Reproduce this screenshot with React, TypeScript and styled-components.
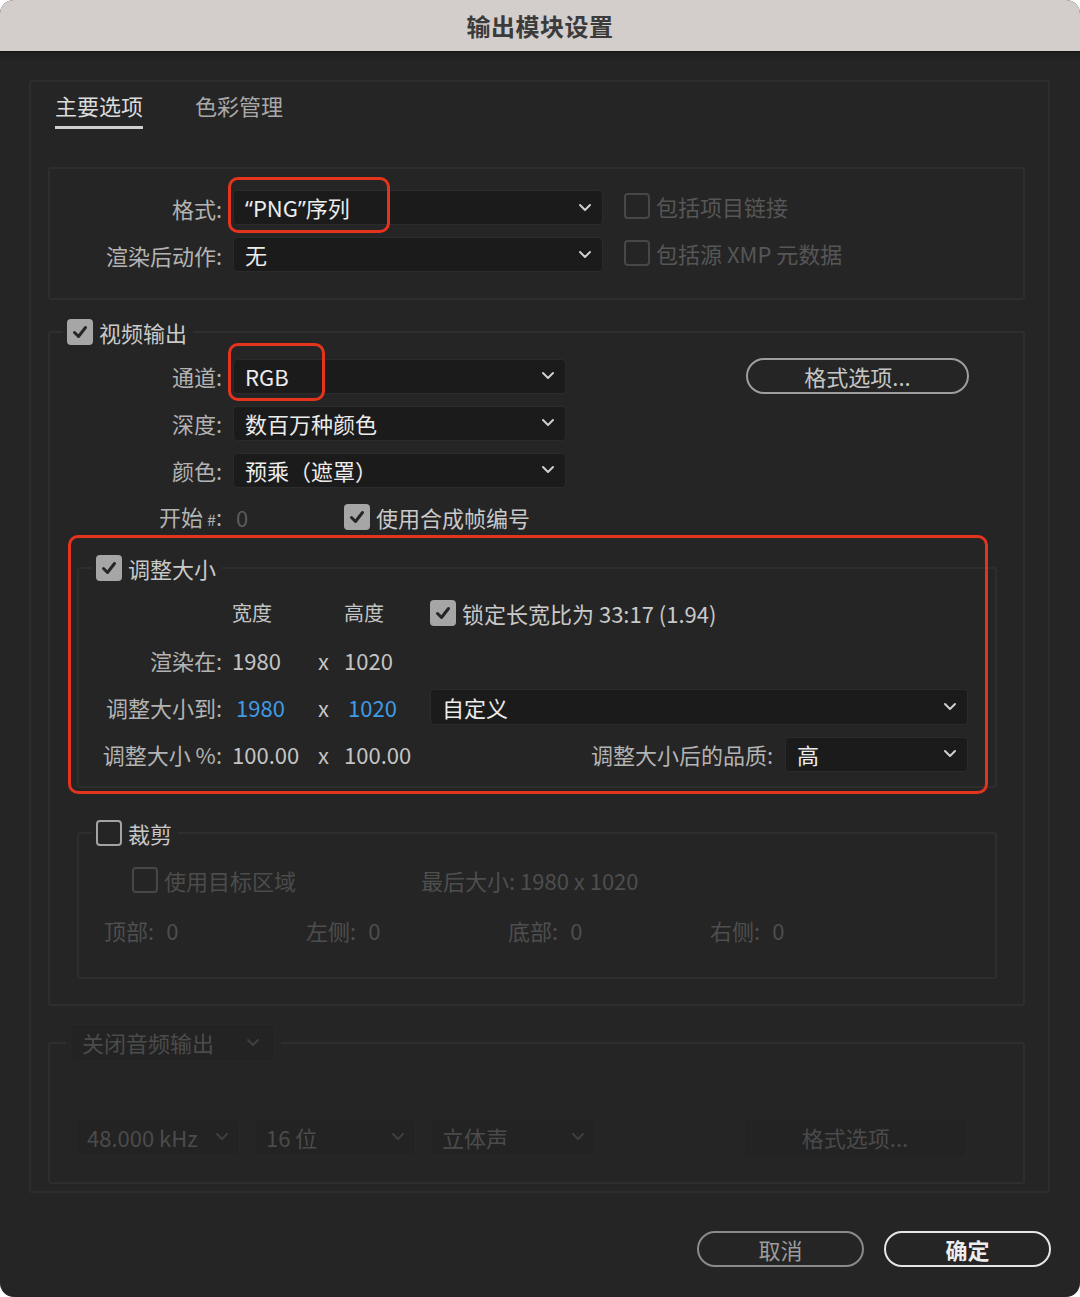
import styled, { createGlobalStyle } from "styled-components";

const GlobalStyle = createGlobalStyle`
  html, body {
    margin: 0;
    padding: 0;
    background: #ffffff;
  }
  body {
    font-family: "Noto Sans CJK SC", "Noto Sans", sans-serif;
  }
`;

const Window = styled.div`
  width: 1080px;
  height: 1297px;
  border-radius: 14px;
  overflow: hidden;
  background: #252525;
  display: flex;
  flex-direction: column;
  font-family: "Noto Sans CJK SC", "Noto Sans", sans-serif;
`;

const TitleBar = styled.div`
  height: 51px;
  flex-shrink: 0;
  background: #d3cdcc;
  border-bottom: 1px solid #151515;
  display: flex;
  align-items: center;
  justify-content: center;
  font-size: 24px;
  font-weight: 700;
  color: #3b3b3b;
  letter-spacing: 0.5px;
`;

const Body = styled.div`
  padding: 28px 30px 0 29px;
  display: flex;
  flex-direction: column;
  background: linear-gradient(#1f1f1f, #252525 10px);
`;

const MainPanel = styled.div`
  border: 2px solid #2d2d2d;
  border-radius: 2px;
  padding: 0 23px 7px 17px;
`;

const TabBar = styled.div`
  display: flex;
  gap: 52px;
  padding: 8px 0 0 7px;
`;

const Tab = styled.div<{ $active?: boolean }>`
  font-size: 22px;
  line-height: 30px;
  padding-bottom: 6px;
  color: ${(p) => (p.$active ? "#dcdcdc" : "#a9a9a9")};
  border-bottom: 3px solid ${(p) => (p.$active ? "#cfcfcf" : "transparent")};
`;

const Group = styled.fieldset<{ $top: number; $left?: number; $right?: number }>`
  margin: ${(p) => p.$top}px ${(p) => p.$right ?? 0}px 0 ${(p) => p.$left ?? 0}px;
  padding: 0;
  min-width: 0;
  border: 2px solid #2e2e2e;
  border-radius: 3px;
`;

const Legend = styled.legend<{ $offset: number }>`
  margin-left: ${(p) => p.$offset}px;
  padding: 0 6px 0 4px;
  display: flex;
  align-items: center;
  gap: 6px;
  min-height: 30px;
  font-size: 22px;
  line-height: 30px;
  color: #c9c9c9;
`;

const GroupContent = styled.div<{ $pad: string; $gap?: number }>`
  display: flex;
  flex-direction: column;
  gap: ${(p) => p.$gap ?? 0}px;
  padding: ${(p) => p.$pad};
`;

const FieldRow = styled.div<{ $h?: number }>`
  display: flex;
  align-items: center;
  height: ${(p) => p.$h ?? 35}px;
`;

const FieldLabel = styled.div`
  width: 183px;
  flex-shrink: 0;
  box-sizing: border-box;
  padding-right: 11px;
  text-align: right;
  font-size: 22px;
  line-height: 30px;
  color: #b3b3b3;
  white-space: nowrap;
`;

const SmallMark = styled.span`
  font-size: 16px;
  margin-left: 4px;
`;

const NarrowQuote = styled.span`
  font-family: "Noto Sans", sans-serif;
`;

const SelectWrap = styled.div`
  position: relative;
  display: flex;
`;

const SelectBox = styled.div<{ $w?: number; $dim?: boolean; $h?: number }>`
  width: ${(p) => (p.$w ? `${p.$w}px` : "100%")};
  height: ${(p) => p.$h ?? 35}px;
  box-sizing: border-box;
  flex-shrink: 0;
  background: ${(p) => (p.$dim ? "#232323" : "#1b1b1b")};
  border: 1px solid ${(p) => (p.$dim ? "#272727" : "#2b2b2b")};
  border-radius: 4px;
  display: flex;
  align-items: center;
  justify-content: space-between;
  padding: 0 10px 1px 11px;
  font-size: 22px;
  line-height: 30px;
  color: ${(p) => (p.$dim ? "#4b4b4b" : "#ececec")};
  white-space: nowrap;
`;

const Highlight = styled.div<{
  $top: number;
  $left: number;
  $width?: number;
  $height?: number;
  $right?: number;
  $bottom?: number;
}>`
  position: absolute;
  top: ${(p) => p.$top}px;
  left: ${(p) => p.$left}px;
  ${(p) => (p.$width !== undefined ? `width: ${p.$width}px;` : `right: ${p.$right}px;`)}
  ${(p) => (p.$height !== undefined ? `height: ${p.$height}px;` : `bottom: ${p.$bottom}px;`)}
  box-sizing: border-box;
  border: 3.5px solid #e5341d;
  border-radius: 10px;
  pointer-events: none;
`;

const CheckBox = styled.span<{ $state: "on" | "off" | "disabled" }>`
  width: 26px;
  height: 26px;
  box-sizing: border-box;
  flex-shrink: 0;
  border-radius: 4px;
  display: inline-flex;
  align-items: center;
  justify-content: center;
  background: ${(p) => (p.$state === "on" ? "#a6a6a6" : "transparent")};
  border: ${(p) =>
    p.$state === "on"
      ? "none"
      : `2.5px solid ${p.$state === "off" ? "#a3a3a3" : "#474747"}`};
`;

const CheckLabel = styled.span<{ $tone?: "normal" | "dim" | "faint"; $gap?: number }>`
  display: inline-flex;
  align-items: center;
  gap: ${(p) => p.$gap ?? 6}px;
  font-size: 22px;
  line-height: 30px;
  white-space: nowrap;
  color: ${(p) =>
    p.$tone === "dim" ? "#565656" : p.$tone === "faint" ? "#4c4c4c" : "#c9c9c9"};
`;

const PillButton = styled.button<{ $w: number; $primary?: boolean; $muted?: boolean }>`
  width: ${(p) => p.$w}px;
  height: 36px;
  flex-shrink: 0;
  padding: 0;
  border-radius: 18px;
  background: transparent;
  border: 2px solid
    ${(p) => (p.$primary ? "#e6e6e6" : p.$muted ? "#8a8a8a" : "#9d9d9d")};
  color: ${(p) => (p.$primary ? "#ececec" : p.$muted ? "#9c9c9c" : "#c6c6c6")};
  font-family: inherit;
  font-size: 22px;
  font-weight: ${(p) => (p.$primary ? 700 : 400)};
  line-height: 30px;
`;

const FormatOptionsButton = styled(PillButton)`
  margin-left: 180px;
`;

const SideCheck = styled.div`
  margin-left: 21px;
`;

const StartValue = styled.span`
  width: 108px;
  padding-left: 3px;
  font-size: 22px;
  color: #5c5c5c;
`;

const ResizeWrap = styled.div`
  position: relative;
  margin: 7px 26px 0 27px;
`;

const ResizeGrid = styled.div`
  display: grid;
  grid-template-columns: 153px 86px 26px 86px 1fr;
  grid-auto-rows: 36px;
  row-gap: 11px;
  align-items: center;
  padding: 12px 27px 14px 0;
`;

const GridLabel = styled.div`
  text-align: right;
  padding-right: 10px;
  font-size: 22px;
  line-height: 30px;
  color: #b3b3b3;
  white-space: nowrap;
`;

const GridValue = styled.div<{ $blue?: boolean; $small?: boolean }>`
  padding-left: ${(p) => (p.$blue ? 4 : 0)}px;
  font-size: ${(p) => (p.$small ? 20 : 22)}px;
  line-height: 30px;
  color: ${(p) => (p.$blue ? "#3f9be6" : "#c4c4c4")};
  white-space: nowrap;
`;

const QualityCell = styled.div`
  display: flex;
  align-items: center;
  justify-content: flex-end;
  gap: 2px;
`;

const CropRow = styled.div<{ $pad: number }>`
  display: flex;
  align-items: center;
  height: 36px;
  padding-left: ${(p) => p.$pad}px;
`;

const CropCell = styled.div<{ $w: number }>`
  width: ${(p) => p.$w}px;
  flex-shrink: 0;
  display: flex;
  align-items: center;
  font-size: 22px;
  line-height: 30px;
  color: #4e4e4e;
  white-space: nowrap;
`;

const CropNumber = styled.span`
  margin-left: 12px;
`;

const AudioLegendBox = styled(SelectBox)`
  padding-right: 14px;
`;

const AudioRow = styled.div`
  display: flex;
  align-items: center;
  gap: 14px;
  padding-left: 25px;
  padding-right: 58px;
  height: 38px;
`;

const AudioButton = styled.div`
  margin-left: auto;
  width: 220px;
  height: 37px;
  border-radius: 4px;
  background: #232323;
  display: flex;
  align-items: center;
  justify-content: center;
  font-size: 22px;
  color: #4a4a4a;
`;

const Footer = styled.div`
  display: flex;
  justify-content: flex-end;
  gap: 20px;
  margin: 38px -1px 0 0;
`;

function Chevron({ color = "#cfcfcf" }: { color?: string }) {
  return (
    <svg width="14" height="9" viewBox="0 0 14 9">
      <polyline
        points="2,2 7,7 12,2"
        fill="none"
        stroke={color}
        strokeWidth="2"
        strokeLinecap="round"
        strokeLinejoin="round"
      />
    </svg>
  );
}

function Check({ state }: { state: "on" | "off" | "disabled" }) {
  return (
    <CheckBox $state={state}>
      {state === "on" && (
        <svg width="20" height="20" viewBox="0 0 20 20">
          <polyline
            points="4.5,10.5 8.5,14.5 15.5,5.5"
            fill="none"
            stroke="#262626"
            strokeWidth="3"
            strokeLinecap="round"
            strokeLinejoin="round"
          />
        </svg>
      )}
    </CheckBox>
  );
}

function Select({
  value,
  width,
  dim,
  height,
}: {
  value: React.ReactNode;
  width?: number;
  dim?: boolean;
  height?: number;
}) {
  return (
    <SelectBox $w={width} $dim={dim} $h={height}>
      <span>{value}</span>
      <Chevron color={dim ? "#3f3f3f" : "#cfcfcf"} />
    </SelectBox>
  );
}

export default function App() {
  return (
    <>
      <GlobalStyle />
      <Window>
        <TitleBar>输出模块设置</TitleBar>
        <Body>
          <MainPanel>
            <TabBar>
              <Tab $active>主要选项</Tab>
              <Tab>色彩管理</Tab>
            </TabBar>

            <Group $top={38}>
              <GroupContent $pad="21px 0 26px" $gap={12}>
                <FieldRow>
                  <FieldLabel>格式:</FieldLabel>
                  <SelectWrap>
                    <Select
                      value={
                        <>
                          <NarrowQuote>{"\u201c"}</NarrowQuote>PNG
                          <NarrowQuote>{"\u201d"}</NarrowQuote>序列
                        </>
                      }
                      width={370}
                    />
                    <Highlight $top={-13} $left={-5} $width={162} $height={56} />
                  </SelectWrap>
                  <SideCheck>
                    <CheckLabel $tone="dim">
                      <Check state="disabled" />
                      包括项目链接
                    </CheckLabel>
                  </SideCheck>
                </FieldRow>
                <FieldRow>
                  <FieldLabel>渲染后动作:</FieldLabel>
                  <Select value="无" width={370} />
                  <SideCheck>
                    <CheckLabel $tone="dim">
                      <Check state="disabled" />
                      包括源 XMP 元数据
                    </CheckLabel>
                  </SideCheck>
                </FieldRow>
              </GroupContent>
            </Group>

            <Group $top={17}>
              <Legend $offset={13}>
                <Check state="on" />
                视频输出
              </Legend>
              <GroupContent $pad="11px 0 25px" $gap={11}>
                <FieldRow $h={36}>
                  <FieldLabel>通道:</FieldLabel>
                  <SelectWrap>
                    <Select value="RGB" width={333} />
                    <Highlight $top={-16} $left={-5} $width={97} $height={58} />
                  </SelectWrap>
                  <FormatOptionsButton $w={223}>格式选项...</FormatOptionsButton>
                </FieldRow>
                <FieldRow $h={36}>
                  <FieldLabel>深度:</FieldLabel>
                  <Select value="数百万种颜色" width={333} />
                </FieldRow>
                <FieldRow $h={36}>
                  <FieldLabel>颜色:</FieldLabel>
                  <Select value="预乘（遮罩）" width={333} />
                </FieldRow>
                <FieldRow $h={36}>
                  <FieldLabel>
                    开始<SmallMark>#</SmallMark>:
                  </FieldLabel>
                  <StartValue>0</StartValue>
                  <CheckLabel>
                    <Check state="on" />
                    使用合成帧编号
                  </CheckLabel>
                </FieldRow>

                <ResizeWrap>
                  <Group $top={0}>
                    <Legend $offset={13}>
                      <Check state="on" />
                      调整大小
                    </Legend>
                    <ResizeGrid>
                      <span />
                      <GridValue $small>宽度</GridValue>
                      <span />
                      <GridValue $small>高度</GridValue>
                      <CheckLabel>
                        <Check state="on" />
                        锁定长宽比为 33:17 (1.94)
                      </CheckLabel>

                      <GridLabel>渲染在:</GridLabel>
                      <GridValue>1980</GridValue>
                      <GridValue>x</GridValue>
                      <GridValue>1020</GridValue>
                      <span />

                      <GridLabel>调整大小到:</GridLabel>
                      <GridValue $blue>1980</GridValue>
                      <GridValue>x</GridValue>
                      <GridValue $blue>1020</GridValue>
                      <Select value="自定义" height={36} />

                      <GridLabel>调整大小 %:</GridLabel>
                      <GridValue>100.00</GridValue>
                      <GridValue>x</GridValue>
                      <GridValue>100.00</GridValue>
                      <QualityCell>
                        <GridLabel as="span">调整大小后的品质:</GridLabel>
                        <Select value="高" width={183} />
                      </QualityCell>
                    </ResizeGrid>
                  </Group>
                  <Highlight $top={-18} $left={-9} $right={9} $bottom={-6} />
                </ResizeWrap>

                <Group $top={19} $left={27} $right={26}>
                  <Legend $offset={13}>
                    <Check state="off" />
                    裁剪
                  </Legend>
                  <GroupContent $pad="14px 0 29px" $gap={14}>
                    <CropRow $pad={53}>
                      <CropCell $w={289}>
                        <CheckLabel $tone="faint">
                          <Check state="disabled" />
                          使用目标区域
                        </CheckLabel>
                      </CropCell>
                      <CropCell $w={260}>最后大小: 1980 x 1020</CropCell>
                    </CropRow>
                    <CropRow $pad={25}>
                      <CropCell $w={202}>
                        顶部:<CropNumber>0</CropNumber>
                      </CropCell>
                      <CropCell $w={202}>
                        左侧:<CropNumber>0</CropNumber>
                      </CropCell>
                      <CropCell $w={202}>
                        底部:<CropNumber>0</CropNumber>
                      </CropCell>
                      <CropCell $w={202}>
                        右侧:<CropNumber>0</CropNumber>
                      </CropCell>
                    </CropRow>
                  </GroupContent>
                </Group>
              </GroupContent>
            </Group>

            <Group $top={18}>
              <Legend $offset={16}>
                <AudioLegendBox $w={205} $dim $h={37}>
                  <span>关闭音频输出</span>
                  <Chevron color="#3f3f3f" />
                </AudioLegendBox>
              </Legend>
              <GroupContent $pad="57px 0 26px">
                <AudioRow>
                  <Select value="48.000 kHz" width={165} dim height={37} />
                  <Select value="16 位" width={162} dim height={37} />
                  <Select value="立体声" width={166} dim height={37} />
                  <AudioButton>格式选项...</AudioButton>
                </AudioRow>
              </GroupContent>
            </Group>
          </MainPanel>

          <Footer>
            <PillButton $w={167} $muted>
              取消
            </PillButton>
            <PillButton $w={167} $primary>
              确定
            </PillButton>
          </Footer>
        </Body>
      </Window>
    </>
  );
}
